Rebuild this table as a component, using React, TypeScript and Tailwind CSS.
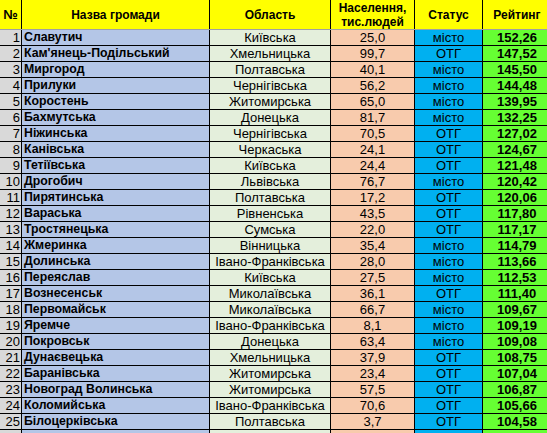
const rows: [string, string, string, string, string][] = [
  ["Славутич", "Київська", "25,0", "місто", "152,26"],
  ["Кам'янець-Подільський", "Хмельницька", "99,7", "ОТГ", "147,52"],
  ["Миргород", "Полтавська", "40,1", "місто", "145,50"],
  ["Прилуки", "Чернігівська", "56,2", "місто", "144,48"],
  ["Коростень", "Житомирська", "65,0", "місто", "139,95"],
  ["Бахмутська", "Донецька", "81,7", "місто", "132,25"],
  ["Ніжинська", "Чернігівська", "70,5", "ОТГ", "127,02"],
  ["Канівська", "Черкаська", "24,1", "ОТГ", "124,67"],
  ["Тетіївська", "Київська", "24,4", "ОТГ", "121,48"],
  ["Дрогобич", "Львівська", "76,7", "місто", "120,42"],
  ["Пирятинська", "Полтавська", "17,2", "ОТГ", "120,06"],
  ["Вараська", "Рівненська", "43,5", "ОТГ", "117,80"],
  ["Тростянецька", "Сумська", "22,0", "ОТГ", "117,17"],
  ["Жмеринка", "Вінницька", "35,4", "місто", "114,79"],
  ["Долинська", "Івано-Франківська", "28,0", "місто", "113,66"],
  ["Переяслав", "Київська", "27,5", "місто", "112,53"],
  ["Вознесенськ", "Миколаївська", "36,1", "ОТГ", "111,40"],
  ["Первомайськ", "Миколаївська", "66,7", "місто", "109,67"],
  ["Яремче", "Івано-Франківська", "8,1", "місто", "109,19"],
  ["Покровськ", "Донецька", "63,4", "місто", "109,08"],
  ["Дунаєвецька", "Хмельницька", "37,9", "ОТГ", "108,75"],
  ["Баранівська", "Житомирська", "23,4", "ОТГ", "107,04"],
  ["Новоград Волинська", "Житомирська", "57,5", "ОТГ", "106,87"],
  ["Коломийська", "Івано-Франківська", "70,6", "ОТГ", "105,66"],
  ["Білоцерківська", "Полтавська", "3,7", "ОТГ", "104,58"],
];

const App = () => {
  return (
    <div className="w-[547px] h-[433px] overflow-hidden bg-white font-['Liberation_Sans',Arial,sans-serif] text-[13px] text-black">
      {/* header */}
      <div className="flex h-[30px] w-[551px] bg-[#ffff00] border-b border-b-[#a0a0a0] font-bold text-[12px] leading-[14px]">
        <div className="w-[22px] shrink-0 border-r border-black flex items-center justify-center text-[13px]">№</div>
        <div className="w-[188px] shrink-0 border-r border-black flex items-center justify-center">Назва громади</div>
        <div className="w-[121px] shrink-0 border-r border-black flex items-center justify-center">Область</div>
        <div className="w-[84px] shrink-0 border-r border-black flex items-center justify-center text-center">
          Населення,
          <br />
          тис.людей
        </div>
        <div className="w-[68px] shrink-0 border-r border-black flex items-center justify-center">Статус</div>
        <div className="w-[68px] shrink-0 flex items-center justify-center">Рейтинг</div>
      </div>

      {rows.map(([name, oblast, pop, status, rating], i) => (
        <div key={i} className="flex h-[16px] w-[551px] border-b border-black leading-[15px]">
          <div className="w-[22px] shrink-0 border-r border-black bg-[#d9d9d9] text-right pr-[1px]">{i + 1}</div>
          <div className="w-[188px] shrink-0 border-r border-black bg-[#b4c6e7] pl-[2px] font-bold text-[12.3px] whitespace-nowrap">{name}</div>
          <div className="w-[121px] shrink-0 border-r border-black bg-[#e4efdc] text-center whitespace-nowrap">{oblast}</div>
          <div className="w-[84px] shrink-0 border-r border-black bg-[#f8cbad] text-center">{pop}</div>
          <div className="w-[68px] shrink-0 border-r border-black bg-[#00b0f0] text-center">{status}</div>
          <div className="w-[68px] shrink-0 bg-[#66ff33] text-center font-bold">{rating}</div>
        </div>
      ))}

      {/* next row, cut off by the window */}
      <div className="flex h-[16px] w-[551px]">
        <div className="w-[22px] shrink-0 border-r border-black bg-[#d9d9d9]" />
        <div className="w-[188px] shrink-0 border-r border-black bg-[#b4c6e7]" />
        <div className="w-[121px] shrink-0 border-r border-black bg-[#e4efdc]" />
        <div className="w-[84px] shrink-0 border-r border-black bg-[#f8cbad]" />
        <div className="w-[68px] shrink-0 border-r border-black bg-[#00b0f0]" />
        <div className="w-[68px] shrink-0 bg-[#66ff33]" />
      </div>
    </div>
  );
};

export default App;
